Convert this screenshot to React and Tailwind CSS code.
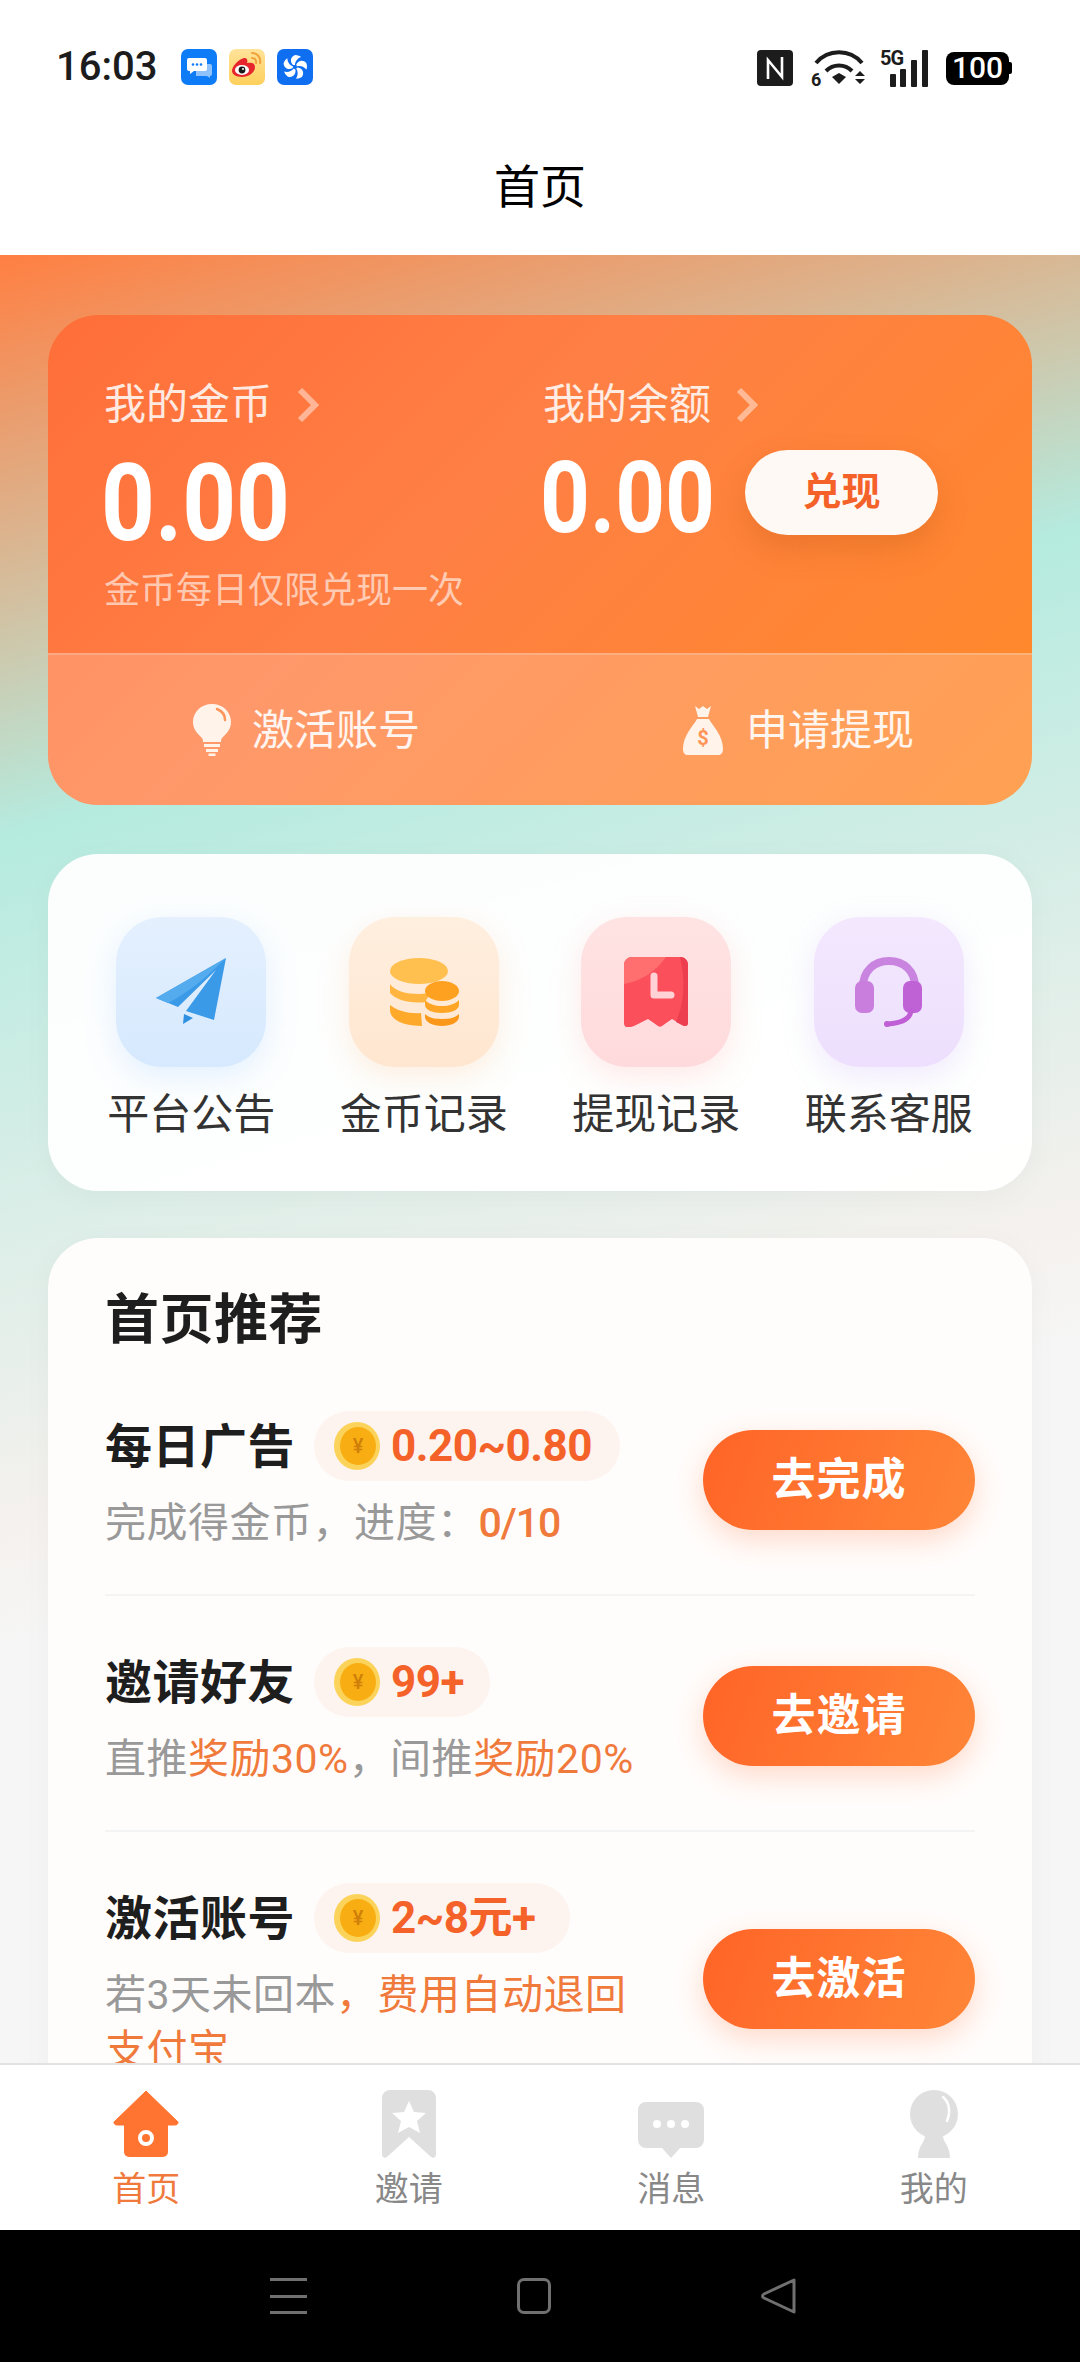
function MessageTile() {
  return (
    <svg width="36" height="36" viewBox="0 0 36 36">
      <rect width="36" height="36" rx="7" fill="#0f7cf7" />
      <path d="M15 15h14a2 2 0 0 1 2 2v8a2 2 0 0 1-2 2v2l-3-2H15z" fill="#8fc2fb" />
      <path d="M8 9h16a2 2 0 0 1 2 2v9a2 2 0 0 1-2 2H13l-4 3v-3H8a2 2 0 0 1-2-2v-9a2 2 0 0 1 2-2z" fill="#fff" />
      <circle cx="12" cy="15.5" r="1.3" fill="#0f7cf7" />
      <circle cx="16" cy="15.5" r="1.3" fill="#0f7cf7" />
      <circle cx="20" cy="15.5" r="1.3" fill="#0f7cf7" />
    </svg>
  )
}

function WeiboTile() {
  return (
    <svg width="36" height="36" viewBox="0 0 36 36">
      <defs>
        <linearGradient id="wb" x1="0" y1="0" x2="0" y2="1">
          <stop offset="0" stopColor="#ffe39a" />
          <stop offset="1" stopColor="#fdd05c" />
        </linearGradient>
      </defs>
      <rect width="36" height="36" rx="7" fill="url(#wb)" />
      <path d="M3 22c0-5 7-12 12-13 3 0 4 2 3 5 5-1 8 0 8 4 0 6-7 10-13 10-6 0-10-3-10-6z" fill="#e6252c" />
      <ellipse cx="13" cy="21" rx="7" ry="5" fill="#fff" />
      <circle cx="13" cy="21" r="3.400" fill="#1b1b1b" />
      <circle cx="14" cy="20" r="1" fill="#fff" />
      <path d="M23 4c5 0 9 4 8 10M23 9c3 0 4.500 2 4 5" stroke="#f2a13a" strokeWidth="2" fill="none" strokeLinecap="round" />
    </svg>
  )
}

function FanTile() {
  return (
    <svg width="36" height="36" viewBox="0 0 36 36">
      <rect width="36" height="36" rx="7" fill="#0f6ff0" />
      <g fill="#fff">
        <path d="M16 16C13 13 13 8 18 6c3 0 5 1 6 2-3 1-6 4-6 8z" />
        <path d="M16 16C13 13 13 8 18 6c3 0 5 1 6 2-3 1-6 4-6 8z" transform="rotate(72 18 18)" />
        <path d="M16 16C13 13 13 8 18 6c3 0 5 1 6 2-3 1-6 4-6 8z" transform="rotate(144 18 18)" />
        <path d="M16 16C13 13 13 8 18 6c3 0 5 1 6 2-3 1-6 4-6 8z" transform="rotate(216 18 18)" />
        <path d="M16 16C13 13 13 8 18 6c3 0 5 1 6 2-3 1-6 4-6 8z" transform="rotate(288 18 18)" />
      </g>
    </svg>
  )
}

function StatusRight() {
  return (
    <div className="flex items-center gap-[13px]">
      <svg width="36" height="36" viewBox="0 0 36 36" className="mr-[5px]">
        <rect width="36" height="36" rx="4" fill="#1c1c1c" />
        <path d="M11 29V10l14 17V7" stroke="#fff" strokeWidth="2.600" fill="none" />
      </svg>
      <svg width="56" height="38" viewBox="0 0 56 38" className="overflow-visible">
        <path d="M5 14a30 30 0 0 1 46 0" stroke="#1c1c1c" strokeWidth="4" fill="none" />
        <path d="M15 22a18 18 0 0 1 26 0" stroke="#1c1c1c" strokeWidth="4" fill="none" />
        <path d="M21 28l7-4 7 4-7 7z" fill="#1c1c1c" />
        <path d="M44 27l5-5 5 5zM44 30h10l-5 5z" fill="#1c1c1c" />
        <text x="0" y="37" fontSize="18" fontWeight="700" fill="#1c1c1c" fontFamily="Roboto">6</text>
      </svg>
      <svg width="49" height="37" viewBox="0 0 49 37" className="overflow-visible">
        <text x="0" y="15" fontSize="20" fontWeight="700" letterSpacing="-1" fill="#1c1c1c" fontFamily="Roboto">5G</text>
        <rect x="10" y="24" width="6" height="13" rx="1" fill="#1c1c1c" />
        <rect x="20" y="19" width="6" height="18" rx="1" fill="#1c1c1c" />
        <rect x="31" y="10" width="6" height="27" rx="1" fill="#1c1c1c" />
        <rect x="42" y="0" width="6" height="37" rx="1" fill="#1c1c1c" />
      </svg>
      <div className="ml-[4px] flex items-center">
        <div className="flex h-[33px] w-[63px] items-center justify-center rounded-[8px] bg-black text-[30px] leading-none font-medium text-white">100</div>
        <div className="h-[12px] w-[3px] rounded-r-[2px] bg-black" />
      </div>
    </div>
  )
}

function Bulb({ color, highlight }) {
  return (
    <svg width="40" height="52" viewBox="0 0 40 52">
      <path d="M20 0C9 0 1 8 1 18c0 7 4 11 8 15 2 2 2 3 2 5h18c0-2 0-3 2-5 4-4 8-8 8-15C39 8 31 0 20 0z" fill={color} />
      <path d="M25 5c5 2 8 6 8 11" stroke={highlight} strokeWidth="2.500" fill="none" strokeLinecap="round" />
      <rect x="12" y="40" width="16" height="3" fill={color} />
      <rect x="14" y="45" width="12" height="3" fill={color} />
      <rect x="16.500" y="49.500" width="7" height="2.500" fill={color} />
    </svg>
  )
}

function MoneyBag() {
  return (
    <svg width="42" height="50" viewBox="0 0 42 50">
      <path d="M13 1l4 3 4-3 4 3 4-3-3 11H16z" fill="#fff3ea" />
      <path d="M15 14h12c3 6 14 16 14 30 0 4-2 6-5 6H6c-3 0-5-2-5-6C1 30 12 20 15 14z" fill="#fff3ea" />
      <text x="21" y="40" textAnchor="middle" fontSize="20" fontWeight="700" fill="#ff9558" fontFamily="Roboto">$</text>
    </svg>
  )
}

function Chevron() {
  return (
    <svg width="24" height="34" viewBox="0 0 24 34" className="ml-[24px]">
      <path d="M4 2l15 15L4 32" stroke="#fff" strokeOpacity="0.45" strokeWidth="6" fill="none" />
    </svg>
  )
}

function PlaneIcon() {
  return (
    <svg width="70" height="68" viewBox="0 0 70 68">
      <path d="M70 0L0 40l22 9L60 12 30 53l28 9z" fill="#3a9ae8" />
      <path d="M70 0L0 40l12 5C30 36 50 20 70 0z" fill="#54abee" />
      <path d="M28 56l-1 10 10-6z" fill="#2f8fe0" />
    </svg>
  )
}

function CoinsIcon() {
  return (
    <svg width="70" height="68" viewBox="0 0 70 68">
      <ellipse cx="30" cy="13" rx="29" ry="13" fill="#ffc04f" />
      <path d="M1 26c5 7 16 10 29 10 5 0 10-1 13-2l-6 8v2c-16 2-30-2-36-9z" fill="#ffb53f" />
      <path d="M1 47c7 6 20 9 31 8l1 13c-18 0-32-6-32-16z" fill="#ffa92a" />
      <ellipse cx="53" cy="33" rx="17" ry="10" fill="#ffa120" />
      <path d="M36 42c4 4 10 6 17 6s13-2 17-6v5c0 5-8 8-17 8s-17-3-17-8z" fill="#ffa526" />
      <path d="M36 56c4 4 10 5 17 5s13-1 17-5v3c0 5-8 9-17 9s-17-4-17-9z" fill="#fb981a" />
    </svg>
  )
}

function ReceiptIcon() {
  return (
    <svg width="64" height="70" viewBox="0 0 64 70">
      <path d="M0 8a8 8 0 0 1 8-8h48a8 8 0 0 1 8 8v58c0 3-3 4-6 2l-10-6-10 7c-1 1-3 1-4 0l-10-7-12 6c-6 3-12 4-12-2z" fill="#fb4f5c" />
      <path d="M0 8a8 8 0 0 1 8-8h34C32 14 18 24 0 27z" fill="#ff6f70" />
      <path d="M64 8v58c0 3-3 4-6 2l-6-3C60 46 62 26 56 0c5 0 8 3 8 8z" fill="#ec3e4e" />
      <path d="M30 19v19h17" stroke="#ffd3d6" strokeWidth="7" fill="none" strokeLinecap="round" strokeLinejoin="round" />
    </svg>
  )
}

function HeadsetIcon() {
  return (
    <svg width="68" height="70" viewBox="0 0 68 70">
      <path d="M8 30C8 14 19 4 34 4s26 10 26 26" stroke="#c984e0" strokeWidth="8" fill="none" />
      <rect x="0" y="24" width="19" height="32" rx="7" fill="#c97ddd" />
      <rect x="48" y="24" width="19" height="32" rx="7" fill="#bf62d6" />
      <path d="M56 54c-1 8-10 12-23 13" stroke="#c05ed6" strokeWidth="5" fill="none" strokeLinecap="round" />
      <circle cx="32" cy="67" r="3" fill="#c05ed6" />
    </svg>
  )
}

function Coin() {
  return (
    <svg width="46" height="48" viewBox="0 0 46 48" className="shrink-0">
      <ellipse cx="23" cy="24" rx="23" ry="24" fill="#fcd35a" />
      <ellipse cx="24" cy="24" rx="18" ry="19" fill="#f8ae12" />
      <text x="24" y="31" textAnchor="middle" fontSize="20" fontWeight="500" fill="#d07f0a" fontFamily="Roboto">¥</text>
    </svg>
  )
}

function HomeIcon() {
  return (
    <svg width="66" height="68" viewBox="0 0 66 68">
      <path d="M33 1L65 32c0 3-2 3-5 3H6C3 35 1 35 1 32z" fill="#ff7430" stroke="#ff7430" strokeLinejoin="round" />
      <path d="M11 30h44v32a5 5 0 0 1-5 5H16a5 5 0 0 1-5-5z" fill="#ff7430" />
      <circle cx="33" cy="48" r="6" fill="none" stroke="#fff" strokeWidth="4" />
    </svg>
  )
}

function BookmarkIcon() {
  return (
    <svg width="54" height="68" viewBox="0 0 54 68">
      <path d="M0 8a8 8 0 0 1 8-8h38a8 8 0 0 1 8 8v56c0 4-3 5-6 2L27 47 6 66c-3 3-6 2-6-2z" fill="#dfdfdf" />
      <path d="M27 11l5 11 12 1-9 8 3 12-11-6-11 6 3-12-9-8 12-1z" fill="#fff" />
    </svg>
  )
}

function ChatIcon() {
  return (
    <svg width="66" height="56" viewBox="0 0 66 56">
      <path d="M8 0h50a8 8 0 0 1 8 8v30a8 8 0 0 1-8 8H42l-9 10-9-10H8a8 8 0 0 1-8-8V8a8 8 0 0 1 8-8z" fill="#dfdfdf" />
      <circle cx="19" cy="22" r="4" fill="#fff" />
      <circle cx="33" cy="22" r="4" fill="#fff" />
      <circle cx="47" cy="22" r="4" fill="#fff" />
    </svg>
  )
}

function PersonIcon() {
  return (
    <svg width="48" height="68" viewBox="0 0 48 68">
      <ellipse cx="24" cy="24" rx="24" ry="24" fill="#dfdfdf" />
      <path d="M33 7c6 5 8 14 4 24" stroke="#fff" strokeWidth="2.500" fill="none" strokeLinecap="round" />
      <path d="M15 46h18c0 6 7 10 7 22H8c0-12 7-16 7-22z" fill="#dfdfdf" />
    </svg>
  )
}

function Task({ title, reward, pill, children, action, last }) {
  return (
    <div className={`flex items-center justify-between ${last ? '' : 'border-b-2 border-[#f4f4f4]'} pt-[51px] pb-[43px]`}>
      <div className="w-[540px]">
        <div className="flex h-[70px] items-center">
          <span className="text-[47px] leading-none font-bold tracking-[0.5px] text-[#1e1e1e]">{title}</span>
          <div className={`ml-[19px] flex h-[70px] items-center gap-[11px] rounded-full bg-[#fdf3ef] pl-[20px] ${pill}`}>
            <Coin />
            <span className="text-[44px] leading-none font-bold tracking-[-0.5px] whitespace-nowrap text-[#f4622a]">{reward}</span>
          </div>
        </div>
        <div className="mt-[15px] text-[41px] leading-[55px] tracking-[0.5px] text-[#999999]">{children}</div>
      </div>
      <button className="mb-[3px] flex h-[100px] w-[272px] shrink-0 items-center justify-center rounded-full bg-[linear-gradient(110deg,#ff6427,#ff8638)] text-[44px] font-bold tracking-[1px] text-white shadow-[0_10px_30px_rgba(255,110,50,0.25)]">
        {action}
      </button>
    </div>
  )
}

const entries = [
  { label: '平台公告', icon: <PlaneIcon />, tile: 'bg-[linear-gradient(180deg,#e4f0fe,#d6e9fe)] shadow-[0_10px_30px_rgba(150,200,255,0.25)]' },
  { label: '金币记录', icon: <CoinsIcon />, tile: 'bg-[linear-gradient(180deg,#ffefdf,#ffe6d0)] shadow-[0_10px_30px_rgba(255,190,140,0.25)]' },
  { label: '提现记录', icon: <ReceiptIcon />, tile: 'bg-[linear-gradient(180deg,#ffe3e3,#ffdadc)] shadow-[0_10px_30px_rgba(255,170,170,0.25)]' },
  { label: '联系客服', icon: <HeadsetIcon />, tile: 'bg-[linear-gradient(180deg,#f3e8fe,#eddffd)] shadow-[0_10px_30px_rgba(200,170,250,0.25)]' },
]

const tabs = [
  { label: '首页', icon: <HomeIcon />, active: true },
  { label: '邀请', icon: <BookmarkIcon /> },
  { label: '消息', icon: <ChatIcon /> },
  { label: '我的', icon: <PersonIcon /> },
]

export default function App() {
  return (
    <div className="flex h-[2362px] w-[1080px] flex-col overflow-hidden bg-white [font-family:Roboto,'Noto_Sans_CJK_SC',sans-serif]">
      {/* status bar + title */}
      <div className="h-[255px] shrink-0 bg-white">
        <div className="flex h-[137px] items-start justify-between pt-[49px] pr-[68px] pl-[56px]">
          <div className="flex items-center">
            <span className="w-[125px] text-[40px] leading-[36px] font-medium text-[#1c1c1c]">16:03</span>
            <div className="flex gap-[12px]">
              <MessageTile />
              <WeiboTile />
              <FanTile />
            </div>
          </div>
          <StatusRight />
        </div>
        <div className="text-center text-[46px] leading-[100px] text-black">首页</div>
      </div>

      <main className="min-h-0 flex-1 overflow-hidden bg-[linear-gradient(164deg,#ff7f42_0%,#b5ebdf_27.5%,#dceee8_46%,#f5f1ee_60%,#f6f6f6_66%)] px-[48px] pt-[60px]">
        {/* wallet card */}
        <section className="h-[490px] overflow-hidden rounded-[50px] bg-[linear-gradient(135deg,#ff6e38,#ff7f45_40%,#ff8a28)]">
          <div className="h-[338px] pt-[64px] pl-[56px]">
            <div className="grid grid-cols-[439px_1fr]">
              <div>
                <div className="flex items-center text-[42px] leading-[52px] text-white/85">
                  我的金币
                  <Chevron />
                </div>
                <div className="mt-[20px] -ml-[3px] origin-left scale-x-[0.87] text-[108px] leading-[104px] font-bold text-white">0.00</div>
              </div>
              <div>
                <div className="flex items-center text-[42px] leading-[52px] text-white/85">
                  我的余额
                  <Chevron />
                </div>
                <div className="mt-[17px] flex items-center">
                  <span className="-ml-[3px] origin-left scale-x-[0.87] text-[100px] leading-[100px] font-bold text-white">0.00</span>
                  <button className="mb-[12px] ml-[4px] flex h-[85px] w-[193px] items-center justify-center rounded-full bg-[#fff9f5] text-[39px] font-bold text-[#f4622a] shadow-[0_14px_30px_rgba(190,90,20,0.3)]">
                    兑现
                  </button>
                </div>
              </div>
            </div>
            <div className="mt-[14px] text-[36px] leading-[44px] text-white/60">金币每日仅限兑现一次</div>
          </div>
          <div className="flex h-[152px] items-center border-t-2 border-white/20 bg-white/20">
            <div className="flex w-[560px] items-center justify-center gap-[20px] pr-[44px]">
              <Bulb color="#fff3ea" highlight="#ff9558" />
              <span className="text-[42px] text-white/90">激活账号</span>
            </div>
            <div className="flex items-center gap-[22px] pl-[74px]">
              <MoneyBag />
              <span className="text-[42px] text-white/90">申请提现</span>
            </div>
          </div>
        </section>

        {/* shortcuts */}
        <section className="mt-[49px] grid h-[337px] grid-cols-4 rounded-[50px] bg-white/95 px-[27px] pt-[63px] shadow-[0_6px_24px_rgba(120,120,120,0.06)]">
          {entries.map(e => (
            <div key={e.label} className="flex flex-col items-center">
              <div className={`flex h-[150px] w-[150px] items-center justify-center rounded-[46px] ${e.tile}`}>{e.icon}</div>
              <span className="mt-[22px] text-[42px] leading-[52px] text-[#333333]">{e.label}</span>
            </div>
          ))}
        </section>

        {/* recommended */}
        <section className="mt-[47px] rounded-t-[50px] bg-[#fffdfc] px-[57px] pt-[53px] shadow-[0_6px_24px_rgba(120,120,120,0.06)]">
          <h2 className="text-[54px] leading-[60px] font-bold tracking-[0.5px] text-[#1e1e1e]">首页推荐</h2>
          <div className="mt-[9px]">
            <Task title="每日广告" reward="0.20~0.80" pill="w-[306px]" action="去完成">
              完成得金币，进度：<span className="font-medium tracking-[-1px] text-[#f07a3c]">0/10</span>
            </Task>
            <Task title="邀请好友" reward="99+" pill="w-[176px]" action="去邀请">
              直推<span className="text-[#f07a3c]">奖励30%</span>，间推<span className="text-[#f07a3c]">奖励20%</span>
            </Task>
            <Task title="激活账号" reward="2~8元+" pill="w-[256px]" action="去激活" last>
              若3天未回本<span className="text-[#f07a3c]">，费用自动退回支付宝</span>
            </Task>
          </div>
        </section>
      </main>

      {/* tab bar */}
      <nav className="grid h-[167px] shrink-0 grid-cols-4 border-t-2 border-[#e2e2e2] bg-white px-[15px] pt-[25px]">
        {tabs.map(t => (
          <div key={t.label} className="flex flex-col items-center">
            <div className="flex h-[68px] items-end">{t.icon}</div>
            <span className={`mt-[10px] text-[34px] leading-[42px] ${t.active ? 'text-[#f07a3c]' : 'text-[#888888]'}`}>{t.label}</span>
          </div>
        ))}
      </nav>

      {/* system nav */}
      <div className="flex h-[132px] shrink-0 items-center justify-center gap-[210px] bg-black pr-[14px]">
        <div className="flex h-[36px] w-[37px] flex-col justify-between">
          <div className="h-[3px] bg-[#707070]" />
          <div className="h-[3px] bg-[#707070]" />
          <div className="h-[3px] bg-[#707070]" />
        </div>
        <div className="h-[36px] w-[34px] rounded-[7px] border-[3px] border-[#707070]" />
        <svg width="36" height="36" viewBox="0 0 36 36">
          <path d="M33 2v32L3 20c-2-1-2-3 0-4z" fill="none" stroke="#707070" strokeWidth="3" strokeLinejoin="round" />
        </svg>
      </div>
    </div>
  )
}
